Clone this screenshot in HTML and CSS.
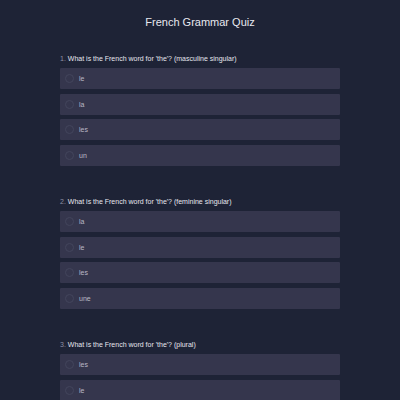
FILE: index.html
```html
<!DOCTYPE html>
<html>
<head>
<meta charset="utf-8">
<link rel="stylesheet" href="styles.css">
</head>
<body>
<div class="quiz">
  <h1 class="title">French Grammar Quiz</h1>
  <div class="question">
    <div class="prompt"><span class="num">1.</span> What is the French word for 'the'? (masculine singular)</div>
    <div class="options">
      <label class="option"><span class="radio"></span><span class="text">le</span></label>
      <label class="option"><span class="radio"></span><span class="text">la</span></label>
      <label class="option"><span class="radio"></span><span class="text">les</span></label>
      <label class="option"><span class="radio"></span><span class="text">un</span></label>
    </div>
  </div>
  <div class="question">
    <div class="prompt"><span class="num">2.</span> What is the French word for 'the'? (feminine singular)</div>
    <div class="options">
      <label class="option"><span class="radio"></span><span class="text">la</span></label>
      <label class="option"><span class="radio"></span><span class="text">le</span></label>
      <label class="option"><span class="radio"></span><span class="text">les</span></label>
      <label class="option"><span class="radio"></span><span class="text">une</span></label>
    </div>
  </div>
  <div class="question">
    <div class="prompt"><span class="num">3.</span> What is the French word for 'the'? (plural)</div>
    <div class="options">
      <label class="option"><span class="radio"></span><span class="text">les</span></label>
      <label class="option"><span class="radio"></span><span class="text">le</span></label>
      <label class="option"><span class="radio"></span><span class="text">la</span></label>
      <label class="option"><span class="radio"></span><span class="text">des</span></label>
    </div>
  </div>
</div>
</body>
</html>
```
FILE: styles.css
```css
html, body {
  margin: 0;
  padding: 0;
  background: #1e2336;
  font-family: "Liberation Sans", Arial, sans-serif;
  color: #e4e4ec;
}
.quiz {
  width: 280px;
  margin: 0 auto;
  padding-top: 15px;
}
.title {
  margin: 0 0 24.5px 0;
  font-size: 11px;
  font-weight: normal;
  text-align: center;
  line-height: 14px;
  color: #e8e8ef;
}
.question {
  margin-bottom: 30.5px;
}
.prompt {
  font-size: 7px;
  line-height: 9px;
  margin-bottom: 5.5px;
  color: #e6e6ee;
}
.num {
  color: #8d90a3;
}
.options {
  display: flex;
  flex-direction: column;
  gap: 4.7px;
}
.option {
  display: flex;
  align-items: center;
  gap: 5px;
  height: 21px;
  padding-left: 5px;
  background: #35364d;
  border-radius: 1px;
  font-size: 7px;
  color: #b9b9c6;
}
.radio {
  width: 9px;
  height: 9px;
  border: 1px solid #43455c;
  border-radius: 50%;
  box-sizing: border-box;
}
```
